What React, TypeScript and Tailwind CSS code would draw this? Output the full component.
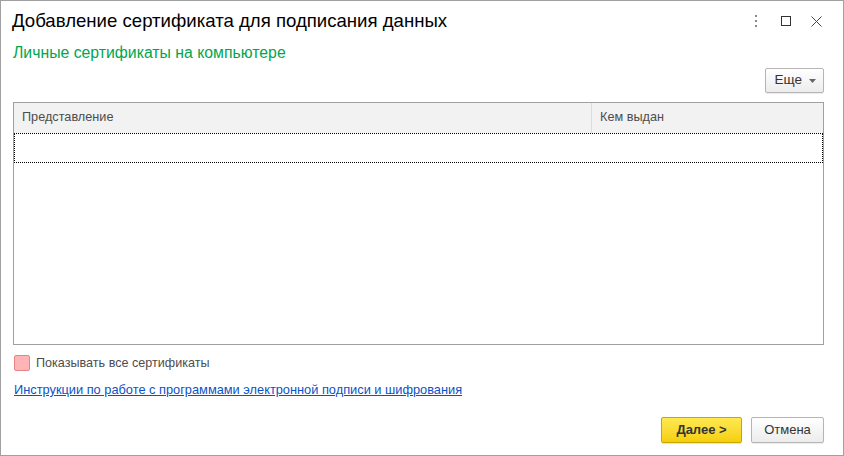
import React from "react";

export default function App() {
  return (
    <div
      className="w-[844px] h-[456px] border border-[#a0a0a0] bg-white flex flex-col overflow-hidden"
      style={{ fontFamily: '"Liberation Sans", Arial, sans-serif' }}
    >
      {/* Title bar */}
      <div className="h-[40px] flex items-center pl-[11px] pr-[12px]">
        <div className="text-[18.6px] leading-[22px] text-black flex-1">
          Добавление сертификата для подписания данных
        </div>
        <div className="flex items-center">
          <div className="w-[30px] flex justify-center">
            <svg width="4" height="12" viewBox="0 0 4 12">
              <rect x="1" y="0" width="2" height="2" fill="#8a8a8a" />
              <rect x="1" y="5" width="2" height="2" fill="#8a8a8a" />
              <rect x="1" y="10" width="2" height="2" fill="#8a8a8a" />
            </svg>
          </div>
          <div className="w-[30px] flex justify-center">
            <svg width="10" height="10" viewBox="0 0 10 10">
              <rect x="0.5" y="0.5" width="9" height="9" fill="none" stroke="#333" strokeWidth="1" />
            </svg>
          </div>
          <div className="w-[30px] flex justify-center">
            <svg width="11" height="11" viewBox="0 0 11 11">
              <path d="M0.5 0.5 L10.5 10.5 M10.5 0.5 L0.5 10.5" stroke="#444" strokeWidth="1" />
            </svg>
          </div>
        </div>
      </div>

      <div className="pl-[12px] pr-[19px] flex flex-col">
        <div className="mt-[3px] text-[15.8px] leading-[18px] text-[#00a64f]">
          Личные сертификаты на компьютере
        </div>

        <div className="mt-[6px] flex justify-end">
          <button className="h-[25px] w-[59px] border border-[#b5b5b5] rounded-[2px] bg-gradient-to-b from-white to-[#ececec] flex items-center justify-end pr-[7px] gap-[7px] text-[13.5px] text-[#333] shadow-[0_1px_1px_rgba(0,0,0,0.08)]">
            <span>Еще</span>
            <svg width="7" height="4" viewBox="0 0 7 4">
              <path d="M0 0 L7 0 L3.5 4 Z" fill="#666" />
            </svg>
          </button>
        </div>

        {/* Table */}
        <div className="mt-[9px] h-[243px] border border-[#a0a0a0] flex flex-col">
          <div className="h-[30px] bg-[#f2f2f2] flex text-[12.7px] text-[#4d4d4d]">
            <div className="w-[578px] border-r border-[#dcdcdc] flex items-center pl-[8px]">
              Представление
            </div>
            <div className="flex-1 flex items-center pl-[8px]">Кем выдан</div>
          </div>
          <div className="h-[30px] border border-dotted border-black"></div>
        </div>

        {/* Checkbox */}
        <div className="mt-[10px] flex items-center gap-[6px] ml-[1px]">
          <div className="w-[16px] h-[16px] rounded-[2px] border border-[#e58585] bg-[#ffb5b5]"></div>
          <span className="text-[12.6px] leading-[16px] text-[#4d4d4d]">
            Показывать все сертификаты
          </span>
        </div>

        <div className="mt-[11px] ml-[1px] text-[12.8px] leading-[16px] text-[#0b52c4] underline">
          Инструкции по работе с программами электронной подписи и шифрования
        </div>

        <div className="mt-[19px] flex justify-end gap-[9px]">
          <button className="h-[26px] w-[81px] border border-[#c9a600] rounded-[2px] bg-gradient-to-b from-[#ffe94d] to-[#f5cf00] text-[13px] font-bold text-[#333] shadow-[0_1px_1px_rgba(0,0,0,0.12)]">
            Далее &gt;
          </button>
          <button className="h-[26px] w-[73px] border border-[#b5b5b5] rounded-[2px] bg-gradient-to-b from-white to-[#ececec] text-[13px] text-[#333] shadow-[0_1px_1px_rgba(0,0,0,0.08)]">
            Отмена
          </button>
        </div>
      </div>
    </div>
  );
}
